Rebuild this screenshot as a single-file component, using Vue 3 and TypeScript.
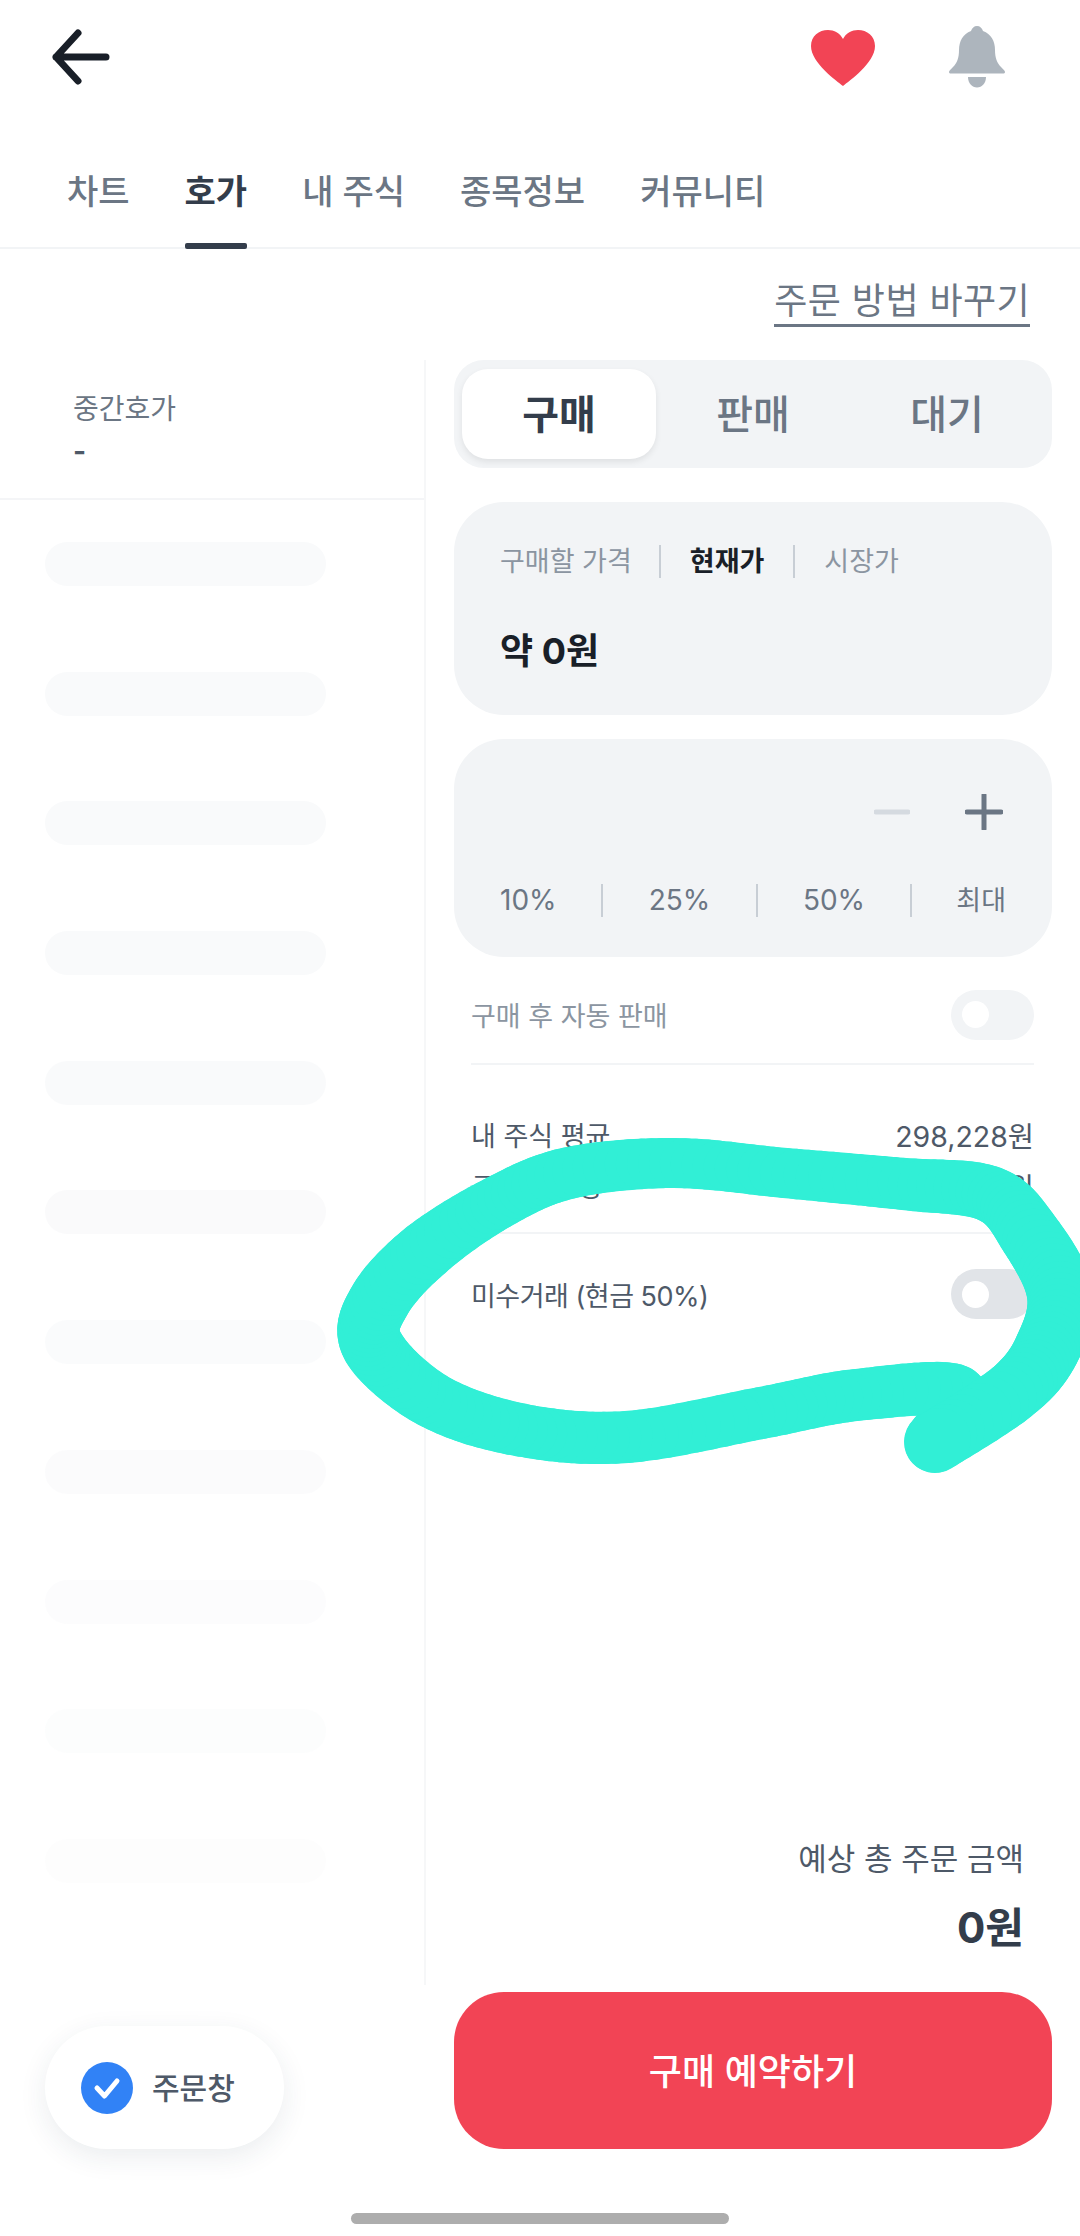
<script setup lang="ts">
const tabs = [
  { label: '차트', active: false },
  { label: '호가', active: true },
  { label: '내 주식', active: false },
  { label: '종목정보', active: false },
  { label: '커뮤니티', active: false },
]
const segments = ['구매', '판매', '대기']
const opacities = [1, 1, 1, 1, 0.95, 0.9, 0.8, 0.7, 0.55, 0.45, 0.4]

// Hand-drawn marker stroke: x, y, stroke width at each control point
const pts: [number, number, number][] = [
  [935, 1442, 62], [958, 1392, 54], [856, 1395, 52], [761, 1413, 52], [627, 1437, 52],
  [521, 1430, 53], [432, 1400, 56], [372, 1345, 62], [380, 1300, 62], [426, 1250, 60],
  [497, 1203, 54], [569, 1173, 52], [674, 1163, 50], [785, 1173, 50], [904, 1184, 52],
  [990, 1194, 56], [1030, 1235, 62], [1060, 1294, 66], [1047, 1349, 66], [1012, 1392, 62],
  [935, 1442, 62],
]
interface Seg { x1: number; y1: number; x2: number; y2: number; w: number }
function sample(p: [number, number, number][]): Seg[] {
  const out: Seg[] = []
  const steps = 10
  for (let i = 0; i < p.length - 1; i++) {
    const a = p[Math.max(i - 1, 0)]
    const b = p[i]
    const c = p[i + 1]
    const d = p[Math.min(i + 2, p.length - 1)]
    let px = b[0]
    let py = b[1]
    for (let s = 1; s <= steps; s++) {
      const t = s / steps
      const t2 = t * t
      const t3 = t2 * t
      const x = 0.5 * (2 * b[0] + (c[0] - a[0]) * t + (2 * a[0] - 5 * b[0] + 4 * c[0] - d[0]) * t2 + (3 * b[0] - a[0] - 3 * c[0] + d[0]) * t3)
      const y = 0.5 * (2 * b[1] + (c[1] - a[1]) * t + (2 * a[1] - 5 * b[1] + 4 * c[1] - d[1]) * t2 + (3 * b[1] - a[1] - 3 * c[1] + d[1]) * t3)
      out.push({ x1: px, y1: py, x2: x, y2: y, w: b[2] + (c[2] - b[2]) * t })
      px = x
      py = y
    }
  }
  return out
}
const strokes = sample(pts)
</script>

<template>
  <div class="screen">
    <header class="topbar">
      <svg class="back" width="60" height="56" viewBox="0 0 60 56">
        <path d="M28 4 L6 28 L28 52 M6 28 H56" fill="none" stroke="#191f28" stroke-width="7" stroke-linecap="round" stroke-linejoin="round" />
      </svg>
      <div class="top-actions">
        <svg width="64" height="56" viewBox="0 0 64 56">
          <path d="M32 56 C26 51 0 33 0 16 C0 6 8 0 17 0 C23 0 29 3 32 9 C35 3 41 0 47 0 C56 0 64 6 64 16 C64 33 38 51 32 56 Z" fill="#f24455" />
        </svg>
        <svg width="58" height="62" viewBox="0 0 58 62">
          <path d="M29 0 C32 0 34 2 35 5 C43 8 47 15 47 24 C47 32 49 37 53 41 C56 44 57 45 57 46 C57 48 55 47.500 53 47.500 H5 C3 47.500 1 48 1 46 C1 45 2 44 5 41 C9 37 11 32 11 24 C11 15 15 8 23 5 C24 2 26 0 29 0 Z" fill="#adb5bd" />
          <path d="M20 51 H38 C38 57 34 61.500 29 61.500 C24 61.500 20 57 20 51 Z" fill="#adb5bd" />
        </svg>
      </div>
    </header>

    <nav class="tabs">
      <span v-for="t in tabs" :key="t.label" class="tab" :class="{ active: t.active }">{{ t.label }}</span>
    </nav>

    <div class="link-row"><span class="link">주문 방법 바꾸기</span></div>

    <main class="body">
      <aside class="book">
        <div class="mid">
          <div class="mid-label">중간호가</div>
          <div class="mid-value">-</div>
        </div>
        <div class="skeletons">
          <div v-for="(o, i) in opacities" :key="i" class="skeleton" :style="{ opacity: o }"></div>
        </div>
      </aside>

      <section class="order">
        <div class="segment">
          <span v-for="(s, i) in segments" :key="s" class="seg" :class="{ on: i === 0 }">{{ s }}</span>
        </div>

        <div class="card price">
          <div class="price-types">
            <span class="pt first">구매할 가격</span>
            <span class="pt strong">현재가</span>
            <span class="pt">시장가</span>
          </div>
          <div class="price-value">약 0원</div>
        </div>

        <div class="card qty">
          <div class="steppers">
            <svg width="36" height="8" viewBox="0 0 36 8"><path d="M2 4 H34" stroke="#d5dae0" stroke-width="5" stroke-linecap="round" /></svg>
            <svg width="38" height="36" viewBox="0 0 38 36"><path d="M2 18 H36 M19 1 V35" stroke="#6b7684" stroke-width="5" stroke-linecap="round" /></svg>
          </div>
          <div class="percents">
            <span class="pc left">10%</span>
            <span class="pc">25%</span>
            <span class="pc">50%</span>
            <span class="pc right">최대</span>
          </div>
        </div>

        <div class="rows">
          <div class="row toggle-row muted border">
            <span>구매 후 자동 판매</span>
            <span class="switch light"><i></i></span>
          </div>
          <div class="stats border">
            <div class="stat"><span class="stat-label">내 주식 평균</span><span>298,228원</span></div>
            <div class="stat"><span class="stat-label">구매 가능량</span><span>0원</span></div>
          </div>
          <div class="row toggle-row">
            <span class="margin-label">미수거래 (현금 50%)</span>
            <span class="switch"><i></i></span>
          </div>
        </div>

        <div class="total">
          <div class="total-label">예상 총 주문 금액</div>
          <div class="total-value">0원</div>
        </div>
      </section>
    </main>

    <footer class="bottom">
      <div class="pill">
        <svg width="52" height="52" viewBox="0 0 52 52">
          <circle cx="26" cy="26" r="26" fill="#3182f6" />
          <path d="M16 26 L23.500 34 L36 19" fill="none" stroke="#fff" stroke-width="5" stroke-linecap="round" stroke-linejoin="round" />
        </svg>
        <span class="pill-text">주문창</span>
      </div>
      <button class="cta">구매 예약하기</button>
    </footer>

    <div class="home"></div>

    <svg class="scribble" width="1080" height="2236" viewBox="0 0 1080 2236">
      <g stroke="#31efd6" stroke-linecap="round">
        <line v-for="(s, i) in strokes" :key="i" :x1="s.x1" :y1="s.y1" :x2="s.x2" :y2="s.y2" :stroke-width="s.w" />
      </g>
    </svg>
  </div>
</template>

<style>
html, body { margin: 0; background: #fff; }
</style>

<style scoped>
.screen {
  position: relative;
  width: 1080px;
  height: 2236px;
  overflow: hidden;
  background: #fff;
  display: flex;
  flex-direction: column;
  font-family: Inter, "Noto Sans CJK KR", sans-serif;
  color: #333d4b;
}
.topbar {
  height: 130px;
  flex: none;
  display: flex;
  justify-content: space-between;
  align-items: flex-start;
  padding: 28px 74px 0 50px;
  box-sizing: border-box;
}
.top-actions { display: flex; gap: 73px; align-items: flex-start; }
.top-actions svg:first-child { margin-top: 2px; }
.top-actions svg:last-child { margin-top: -2px; }
.back { margin-top: 1px; }
.tabs {
  height: 119px;
  flex: none;
  box-sizing: border-box;
  border-bottom: 2px solid #f2f4f6;
  display: flex;
  gap: 55px;
  padding-left: 67px;
}
.tab {
  position: relative;
  height: 119px;
  line-height: 124px;
  font-size: 34px;
  font-weight: 500;
  color: #6b7684;
  white-space: nowrap;
}
.tab.active { color: #333d4b; font-weight: 700; }
.tab.active::after {
  content: "";
  position: absolute;
  left: 0;
  right: 0;
  bottom: 0;
  height: 6px;
  background: #333d4b;
  border-radius: 2px;
}
.link-row {
  height: 111px;
  flex: none;
  display: flex;
  justify-content: flex-end;
  padding-right: 50px;
  padding-top: 24px;
  box-sizing: border-box;
}
.link {
  height: 51px;
  line-height: 57px;
  font-size: 36px;
  letter-spacing: 0.4px;
  color: #6b7684;
  border-bottom: 3px solid #6b7684;
  white-space: nowrap;
}
.body {
  height: 1625px;
  flex: none;
  display: flex;
}
.book {
  width: 426px;
  flex: none;
  box-sizing: border-box;
  border-right: 2px solid #f6f7f8;
}
.mid {
  height: 140px;
  box-sizing: border-box;
  border-bottom: 2px solid #f4f5f7;
  padding: 31px 0 0 73px;
}
.mid-label { font-size: 28px; line-height: 36px; color: #6b7684; }
.mid-value { font-size: 28px; line-height: 32px; margin-top: 8px; color: #4e5968; font-weight: 700; }
.skeletons {
  display: flex;
  flex-direction: column;
  gap: 85.700px;
  padding: 42px 98px 0 45px;
}
.skeleton { height: 44px; border-radius: 22px; background: #f9fafb; }
.order {
  flex: 1;
  display: flex;
  flex-direction: column;
  padding: 0 28px 0 28px;
  min-width: 0;
}
.segment {
  height: 108px;
  flex: none;
  box-sizing: border-box;
  background: #f2f4f6;
  border-radius: 30px;
  padding: 9px 8px;
  display: grid;
  grid-template-columns: repeat(3, 1fr);
  margin-bottom: 34px;
}
.seg {
  display: flex;
  align-items: center;
  justify-content: center;
  font-size: 40px;
  color: #6b7684;
  font-weight: 500;
  border-radius: 26px;
  padding-bottom: 5px;
  box-sizing: border-box;
}
.seg.on {
  background: #fff;
  color: #333d4b;
  font-weight: 700;
  box-shadow: 0 3px 6px rgba(0, 0, 0, 0.08);
}
.card { background: #f2f4f6; border-radius: 50px; box-sizing: border-box; flex: none; }
.price { height: 213px; padding: 43px 46px 0; margin-bottom: 24px; }
.price-types { display: flex; align-items: center; height: 33px; }
.pt {
  font-size: 27px;
  line-height: 33px;
  color: #8b95a1;
  padding: 0 29px;
  border-left: 2px solid #c8ced5;
  white-space: nowrap;
}
.pt.first { padding-left: 0; border-left: 0; padding-right: 27px; }
.pt.strong { color: #191f28; font-weight: 700; }
.price-value {
  margin-top: 50px;
  font-size: 36px;
  line-height: 46px;
  font-weight: 700;
  color: #191f28;
}
.qty { height: 218px; padding: 55px 46px 0; }
.steppers {
  height: 36px;
  display: flex;
  justify-content: flex-end;
  align-items: center;
  gap: 55px;
  padding-right: 3px;
}
.percents {
  margin-top: 54px;
  height: 33px;
  display: grid;
  grid-template-columns: 101px 155px 154px 96px;
  font-size: 28px;
  line-height: 33px;
  color: #6b7684;
}
.pc { text-align: center; border-left: 2px solid #c8ced5; }
.pc.left { text-align: left; border-left: 0; }
.pc.right { text-align: right; font-size: 27px; }
.rows { padding: 0 18px 0 17px; }
.border { border-bottom: 2px solid #f2f4f6; }
.toggle-row {
  display: flex;
  justify-content: space-between;
  align-items: center;
  font-size: 27px;
  color: #4e5968;
}
.toggle-row.muted { color: #8b95a1; height: 108px; box-sizing: border-box; padding-top: 8px; }
.toggle-row:not(.muted) { height: 120px; }
.margin-label { letter-spacing: -0.5px; }
.switch {
  width: 83px;
  height: 50px;
  border-radius: 25px;
  background: #e1e4e8;
  display: flex;
  align-items: center;
  padding-left: 11px;
  box-sizing: border-box;
}
.switch.light { background: #f2f4f6; margin-top: 1px; }
.switch i { width: 27px; height: 27px; border-radius: 50%; background: #fff; }
.stats { height: 169px; box-sizing: border-box; padding-top: 51px; }
.stat {
  display: flex;
  justify-content: space-between;
  height: 51px;
  line-height: 42px;
  font-size: 28.500px;
  color: #4e5968;
}
.stat-label { font-size: 27px; }
.total {
  margin-top: auto;
  padding: 0 28px 0 0;
  text-align: right;
  height: 148px;
  flex: none;
}
.total-label { font-size: 31px; line-height: 44px; color: #4e5968; }
.total-value { margin-top: 19px; font-size: 42px; line-height: 56px; font-weight: 700; color: #333d4b; }
.bottom {
  flex: none;
  height: 164px;
  display: flex;
  justify-content: space-between;
  align-items: flex-end;
  padding: 0 28px 0 45px;
  box-sizing: border-box;
}
.pill {
  width: 239px;
  height: 123px;
  border-radius: 62px;
  background: #fff;
  box-shadow: 0 8px 28px rgba(30, 50, 80, 0.09);
  display: flex;
  align-items: center;
  gap: 19px;
  padding-left: 36px;
  box-sizing: border-box;
  font-size: 30px;
  color: #4e5968;
  font-weight: 500;
}
.pill-text { padding-bottom: 3px; }
.cta {
  width: 598px;
  height: 157px;
  border: 0;
  border-radius: 50px;
  background: #f24455;
  color: #fff;
  font-family: inherit;
  font-size: 36px;
  font-weight: 500;
  padding: 0 0 3px;
}
.home {
  position: absolute;
  left: 351px;
  top: 2213px;
  width: 378px;
  height: 11px;
  border-radius: 6px;
  background: #adadad;
}
.scribble { position: absolute; left: 0; top: 0; pointer-events: none; }
</style>
